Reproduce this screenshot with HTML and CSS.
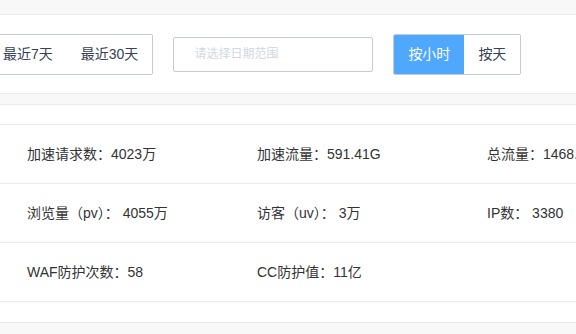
FILE: index.html
```html
<!DOCTYPE html>
<html lang="zh-CN">

<head>
	<meta charset="UTF-8">
	<meta name="viewport" content="width=device-width, initial-scale=1.0">
	<title>流量统计</title>
	<link rel="stylesheet" href="styles.css">
</head>

<body>
	<div class="band band-top"></div>
	<div class="toolbar">
		<div class="btn-group btn-group-range">
			<button class="btn">最近7天</button>
			<button class="btn">最近30天</button>
		</div>
		<div class="date-input">请选择日期范围</div>
		<div class="btn-group">
			<button class="btn btn-active">按小时</button>
			<button class="btn">按天</button>
		</div>
	</div>
	<div class="band"></div>
	<div class="card">
		<div class="stats">
			<div class="stats-row">
				<div class="cell">加速请求数：4023万</div>
				<div class="cell">加速流量：591.41G</div>
				<div class="cell">总流量：1468.22G</div>
			</div>
			<div class="stats-row">
				<div class="cell">浏览量（pv）： 4055万</div>
				<div class="cell">访客（uv）： 3万</div>
				<div class="cell">IP数： 3380</div>
			</div>
			<div class="stats-row">
				<div class="cell">WAF防护次数：58</div>
				<div class="cell">CC防护值：11亿</div>
				<div class="cell"></div>
			</div>
		</div>
	</div>
	<div class="band band-bottom"></div>
</body>

</html>
```

FILE: styles.css
```css
html,
body {
	margin: 0;
	overflow: hidden;
	background: #fff;
}

body {
	font-family: "Liberation Sans", "Noto Sans CJK SC", sans-serif;
	font-size: 14px;
	color: #333;
}

.band {
	height: 10px;
	background: #f8f8f9;
	border-top: 1px solid #e8eaec;
	border-bottom: 1px solid #e8eaec;
}

.band-top {
	height: 14px;
	border-top: none;
}

.band-bottom {
	height: 20px;
	border-bottom: none;
}

.toolbar {
	display: flex;
	align-items: center;
	gap: 20px;
	height: 78px;
	padding-top: 0;
}

.btn-group {
	display: flex;
	border: 1px solid #c5ccd7;
	border-radius: 2px;
	overflow: hidden;
}

.btn-group-range {
	margin-left: -12px;
}

.btn {
	font: inherit;
	height: 39px;
	line-height: 39px;
	padding: 0 14px;
	border: none;
	background: #fff;
	color: #354052;
	white-space: nowrap;
	cursor: pointer;
}

.btn-active {
	background: #50a8fd;
	color: #fff;
}

.date-input {
	box-sizing: border-box;
	width: 200px;
	height: 35px;
	line-height: 33px;
	padding-left: 20px;
	border: 1px solid #c5ccd7;
	border-radius: 2px;
	font-size: 12px;
	color: #d3d7de;
}

.card {
	padding-top: 19px;
	padding-bottom: 20px;
}

.stats {
	border-top: 1px solid #e8eaec;
}

.stats-row {
	display: grid;
	grid-template-columns: repeat(3, 230px);
	height: 58px;
	align-items: center;
	border-bottom: 1px solid #e8eaec;
}

.cell {
	padding-left: 27px;
	white-space: nowrap;
	line-height: 20px;
}
```
